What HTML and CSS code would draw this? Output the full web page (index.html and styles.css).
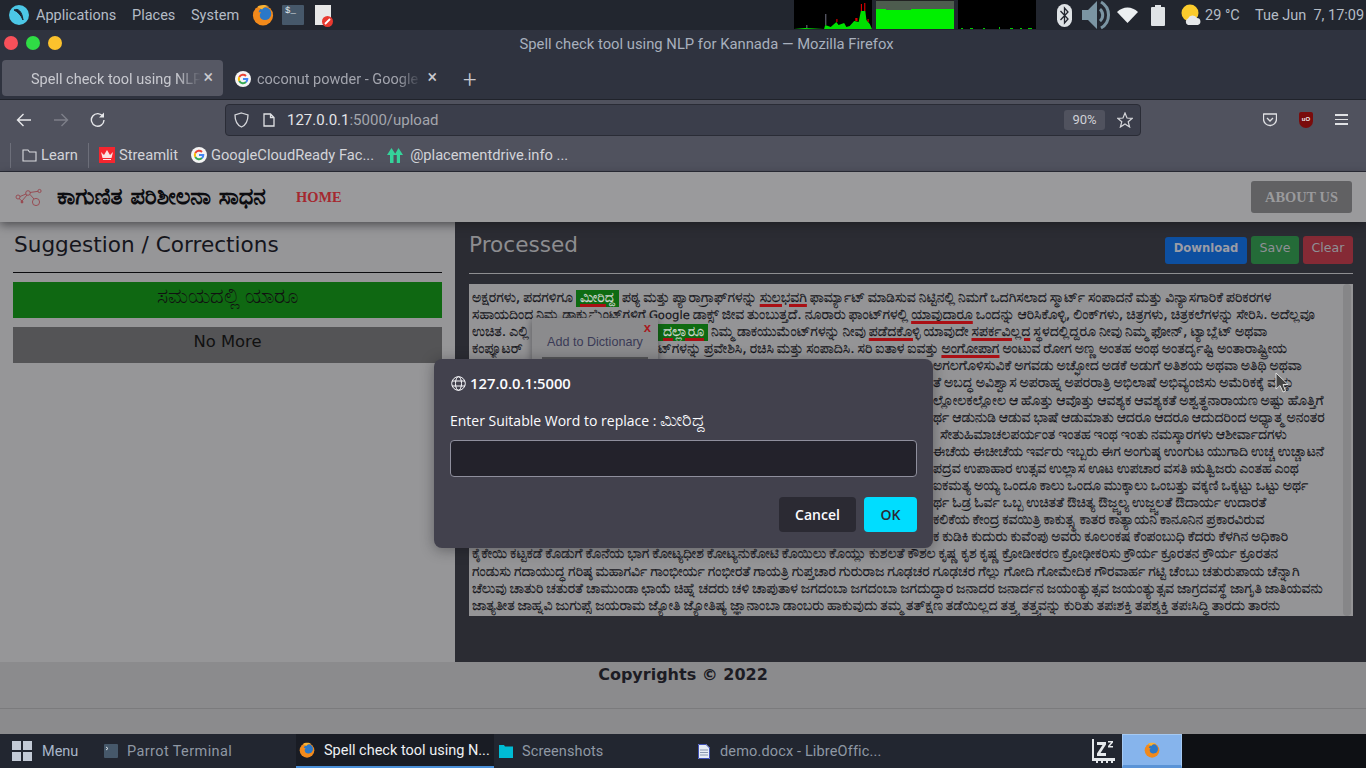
FILE: index.html
```html
<!DOCTYPE html>
<html lang="en">
<head>
    <meta charset="UTF-8">
    <title>Spell check tool using NLP for Kannada</title>
    <link rel="stylesheet" href="styles.css">
</head>
<body>
    <svg class="defs" width="0" height="0">
        <symbol id="fox" viewBox="0 0 24 24">
            <circle cx="12" cy="12.5" r="11" fill="#f28a1c"/>
            <circle cx="14" cy="10.5" r="7" fill="#2b78c8"/>
            <path d="M3 8 C2 14 6 21 13 21 C18 21 21 18 22 14 C19 18 13 19 10 16 C8 14 8 11 10 9 C7 9 5 9 3 8Z" fill="#f28a1c"/>
            <path d="M6 3 C8 1 15 0 19 3 C15 2 12 4 11 6 C9 5 7 4 6 3Z" fill="#f9b233"/>
        </symbol>
        <symbol id="goog" viewBox="0 0 16 16">
            <circle cx="8" cy="8" r="8" fill="#f4f4f4"/>
            <path d="M4.3 6 A4.3 4.3 0 0 1 11 4.9" fill="none" stroke="#e94235" stroke-width="2"/>
            <path d="M4.3 10 A4.3 4.3 0 0 1 4.3 6" fill="none" stroke="#fabb05" stroke-width="2"/>
            <path d="M11 11.1 A4.3 4.3 0 0 1 4.3 10" fill="none" stroke="#34a853" stroke-width="2"/>
            <path d="M8 8 H12.3 A4.3 4.3 0 0 1 11 11.1" fill="none" stroke="#4285f4" stroke-width="2"/>
        </symbol>
    </svg>

    <div class="panel">
        <svg class="p-logo" width="20" height="20" viewBox="0 0 20 20"><circle cx="10" cy="10" r="10" fill="#4cc7e6"/><path d="M5 5 C9 3 13 6 14 15 C12 10 9 7 5 5Z" fill="#1c2430" stroke="#1c2430"/></svg>
        <span class="p-item p-apps">Applications</span>
        <span class="p-item p-places">Places</span>
        <span class="p-item p-system">System</span>
        <svg class="p-fox" width="22" height="22"><use href="#fox"/></svg>
        <div class="p-term">$_</div>
        <svg class="p-doc" width="18" height="22" viewBox="0 0 18 22"><rect width="16" height="20" fill="#e8e8e8"/><circle cx="12.5" cy="16.5" r="5.5" fill="#e8392f"/><path d="M10 19 L15 14" stroke="#fff" stroke-width="1.8"/></svg>
        <svg class="graph g1" width="78" height="29" viewBox="0 0 70 29" preserveAspectRatio="none">
            <rect width="70" height="29" fill="#000"/>
            <path d="M0 29 L10 28 L27 29 L28 25 L33 27 L38 22 L40 25 L45 23 L47 27 L50 26 L54 21 L58 22 L60 11 L64 11 L65 20 L68 24 L70 29Z" fill="#00e000"/>
            <path d="M60 11 V4 H61 V11Z M63 11 V3 H64 V11Z M38 22 V19 H39 V22Z M55 21 V18 H57 V21Z M66 22 V19 H67 V22Z" fill="#e00000"/>
            <path d="M28 25 V14 H29 V25Z M11 28 V25 H12 V28Z" fill="#667"/>
        </svg>
        <svg class="graph g2" width="78" height="29"><rect width="78" height="29" fill="#00f000"/><rect width="78" height="9" fill="#4d5c4e"/><rect x="10" y="9" width="25" height="1" fill="#4d5c4e"/><rect width="78" height="1" fill="#222"/></svg>
        <svg class="graph g3" width="78" height="29"><rect width="78" height="29" fill="#000"/><path d="M3 28h2v1h-2z M12 28h3v1h-3z M25 28h2v1h-2z M41 27h1v2h-1z M52 28h3v1h-3z M62 28h2v1h-2z M70 28h4v1h-4z" fill="#0c0"/></svg>
        <svg class="t-bt" width="15" height="23" viewBox="0 0 15 23"><rect width="15" height="23" rx="7.5" fill="#dfe3e6"/><path d="M3.5 7 L11 15 L7.5 19 V4 L11 8 L3.5 16" fill="none" stroke="#23262f" stroke-width="1.3"/></svg>
        <svg class="t-vol" width="29" height="30" viewBox="0 0 29 30"><path d="M0 10 H6 L15 1 V29 L6 20 H0Z" fill="#7b95a3"/><path d="M18 9 A8 8 0 0 1 18 21 M19 2 A15 15 0 0 1 19 28" fill="none" stroke="#7b95a3" stroke-width="3"/></svg>
        <svg class="t-wifi" width="21" height="16" viewBox="0 0 21 16"><path d="M0 5 C6 -1 15 -1 21 5 L10.5 16Z" fill="#eceff1"/></svg>
        <svg class="t-bat" width="14" height="21" viewBox="0 0 14 21"><path d="M4 0 H10 V2 H13 A1 1 0 0 1 14 3 V20 A1 1 0 0 1 13 21 H1 A1 1 0 0 1 0 20 V3 A1 1 0 0 1 1 2 H4Z" fill="#dfe3e6"/></svg>
        <svg class="t-sun" width="21" height="22" viewBox="0 0 21 22"><circle cx="9" cy="9" r="8.5" fill="#fbcb2c"/><path d="M7 21 A3.5 3.5 0 0 1 7 14.5 A5 5 0 0 1 16 14 A3.6 3.6 0 0 1 17 21Z" fill="#e6e8ea"/></svg>
        <span class="p-item p-temp">29 °C</span>
        <span class="p-item p-date">Tue Jun&nbsp; 7, 17:09</span>
    </div>

    <div class="titlebar">
        <div class="lights"><i class="red"></i><i class="green"></i><i class="amber"></i></div>
        <div class="title">Spell check tool using NLP for Kannada — Mozilla Firefox</div>
    </div>

    <div class="tabs">
        <div class="tab active"><span class="tab-text">Spell check tool using NLP</span><span class="tab-x">×</span></div>
        <div class="tab other">
            <svg width="16" height="16"><use href="#goog"/></svg>
            <span class="tab-text">coconut powder - Google</span><span class="tab-x">×</span>
        </div>
        <span class="newtab">+</span>
    </div>

    <div class="toolbar">
        <svg class="tb-back" width="16" height="14" viewBox="0 0 16 14"><path d="M15 7 H2 M7.5 1 L1.5 7 L7.5 13" fill="none" stroke="#e6e7ea" stroke-width="1.4"/></svg>
        <svg class="tb-fwd" width="16" height="14" viewBox="0 0 16 14"><path d="M1 7 H14 M8.5 1 L14.5 7 L8.5 13" fill="none" stroke="#7d7f89" stroke-width="1.4"/></svg>
        <svg class="tb-reload" width="15" height="15" viewBox="0 0 15 15"><path d="M13 4.5 A6.3 6.3 0 1 0 14 8" fill="none" stroke="#e6e7ea" stroke-width="1.4"/><path d="M14 0.5 V5.5 H9Z" fill="#e6e7ea"/></svg>
        <div class="urlbar">
            <svg class="u-shield" width="15" height="16" viewBox="0 0 15 16"><path d="M7.5 1 L14 3 C14 9 12 13 7.5 15 C3 13 1 9 1 3Z" fill="none" stroke="#d5d6da" stroke-width="1.3"/></svg>
            <svg class="u-page" width="12" height="14" viewBox="0 0 12 14"><path d="M1 1 H7.5 L11 4.5 V13 H1Z M7.5 1 V4.5 H11" fill="none" stroke="#e0e1e4" stroke-width="1.3"/></svg>
            <span class="u-text"><b>127.0.0.1</b>:5000/upload</span>
            <span class="u-zoom">90%</span>
            <svg class="u-star" width="16" height="16" viewBox="0 0 16 16"><path d="M8 1 L10 6 L15.3 6.3 L11.2 9.7 L12.6 15 L8 12 L3.4 15 L4.8 9.7 L0.7 6.3 L6 6Z" fill="none" stroke="#d5d6da" stroke-width="1.2"/></svg>
        </div>
        <svg class="tb-pocket" width="14" height="14" viewBox="0 0 14 14"><path d="M1 1 H13 A0.5 0.5 0 0 1 13.5 2 V6 A6.5 6.5 0 0 1 0.5 6 V2 A0.5 0.5 0 0 1 1 1Z M4 5 L7 8 L10 5" fill="none" stroke="#e0e1e4" stroke-width="1.3"/></svg>
        <div class="tb-ublock">uO</div>
        <div class="tb-menu"><i></i><i></i><i></i></div>
    </div>

    <div class="bookmarks">
        <span class="bm-sep"></span>
        <svg class="bm-folder" width="15" height="13" viewBox="0 0 15 13"><path d="M1 1 H6 L7.5 3 H14 V12 H1Z" fill="none" stroke="#d9dade" stroke-width="1.1"/></svg>
        <span class="bm-text bm-learn">Learn</span>
        <span class="bm-sep bm-sep2"></span>
        <svg class="bm-st" width="16" height="16" viewBox="0 0 16 16"><rect width="16" height="16" fill="#f5262f"/><path d="M2 5 L5 8 L8 3 L11 8 L14 5 L12.5 11 H3.5Z M4 12 H12 V13 H4Z" fill="#fbe2e2"/></svg>
        <span class="bm-text">Streamlit</span>
        <svg class="bm-g" width="16" height="16"><use href="#goog"/></svg>
        <span class="bm-text">GoogleCloudReady Fac...</span>
        <svg class="bm-tree" width="16" height="15" viewBox="0 0 16 15"><path d="M4.5 0 L9 7 H6.5 V15 H3 V7 H0Z M11.5 0 L16 7 H13 V15 H9.8 V7 H7.5Z" fill="#35d39a"/></svg>
        <span class="bm-text">@placementdrive.info ...</span>
    </div>

    <nav class="navbar">
        <svg class="nav-logo" width="28" height="20" viewBox="0 0 28 20" fill="none" stroke="#96454d" stroke-width="0.9"><circle cx="4" cy="10" r="2"/><circle cx="14" cy="6" r="2.3"/><circle cx="22" cy="15" r="3.6"/><circle cx="25.5" cy="4" r="1.6"/><circle cx="8" cy="15" r="1" fill="#96454d"/><path d="M6 9.5 L12 7 M16 7.5 L20 12 M16 5.5 L24 4.3 M5 11.5 L8 14 L13 8"/></svg>
        <span class="brand">ಕಾಗುಣಿತ ಪರಿಶೀಲನಾ ಸಾಧನ</span>
        <a class="home">HOME</a>
        <a class="about">ABOUT US</a>
    </nav>

    <main class="content">
        <section class="left">
            <h2 class="heading">Suggestion / Corrections</h2>
            <hr class="rule dark">
            <div class="sugg ok">ಸಮಯದಲ್ಲಿ ಯಾರೂ</div>
            <div class="sugg none">No More</div>
        </section>
        <section class="right">
            <div class="right-head">
                <h2 class="heading proc">Processed</h2>
                <button class="btn blue">Download</button>
                <button class="btn green">Save</button>
                <button class="btn crimson">Clear</button>
            </div>
            <hr class="rule light">
            <div class="doc">
                <p>ಅಕ್ಷರಗಳು, ಪದಗಳಿಗೂ <mark>ಮೀರಿದ್ದ</mark> ಪಠ್ಯ ಮತ್ತು ಪ್ಯಾರಾಗ್ರಾಫ್‌ಗಳನ್ನು <u>ಸುಲಭವಗಿ</u> ಫಾರ್ಮ್ಯಾಟ್ ಮಾಡಿಸುವ ನಿಟ್ಟಿನಲ್ಲಿ ನಿಮಗೆ ಒದಗಿಸಲಾದ ಸ್ಮಾರ್ಟ್ ಸಂಪಾದನೆ ಮತ್ತು ವಿನ್ಯಾಸಗಾರಿಕೆ ಪರಿಕರಗಳ</p>
                <p>ಸಹಾಯದಿಂದ ನಿಮ್ಮ ಡಾಕ್ಯುಮೆಂಟ್‌ಗಳಿಗೆ <span class="en">Google</span> ಡಾಕ್ಸ್ ಜೀವ ತುಂಬುತ್ತದೆ. ನೂರಾರು ಫಾಂಟ್‌ಗಳಲ್ಲಿ <u>ಯಾವುದಾರೂ</u> ಒಂದನ್ನು ಆರಿಸಿಕೊಳ್ಳಿ, ಲಿಂಕ್‌ಗಳು, ಚಿತ್ರಗಳು, ಚಿತ್ರಕಲೆಗಳನ್ನು ಸೇರಿಸಿ. ಅದೆಲ್ಲವೂ</p>
                <p><span class="clip">ಉಚಿತ. ಎಲ್ಲಿ</span><mark class="cut">ದಲ್ಲಾರೂ</mark> ನಿಮ್ಮ ಡಾಕಯುಮೆಂಟ್‌ಗಳನ್ನು ನೀವು <u>ಪಡೆದಕೊಳ್ಳಿ</u> ಯಾವುದೇ <u>ಸಪರ್ಕವಿಲ್ಲದ</u> ಸ್ಥಳದಲ್ಲಿದ್ದರೂ ನೀವು ನಿಮ್ಮ ಫೋನ್, ಟ್ಯಾಬ್ಲೆಟ್ ಅಥವಾ</p>
                <p><span class="clip">ಕಂಪ್ಯೂಟರ್</span>ಟ್‌ಗಳನ್ನು ಪ್ರವೇಶಿಸಿ, ರಚಿಸಿ ಮತ್ತು ಸಂಪಾದಿಸಿ. ಸರಿ ಐತಾಳ ಐವತ್ತು <u>ಅಂಗೋಪಾಗ</u> ಅಂಟುವ ರೋಗ ಅಣ್ಣ ಅಂತಹ ಅಂಥ ಅಂತರ್ದೃಷ್ಟಿ ಅಂತಾರಾಷ್ಟ್ರೀಯ</p>
                <p><span class="under"></span>ಅಗಲಗೊಳಿಸುವಿಕೆ ಅಗವಡು ಅಚ್ಛೋದ ಅಡಕೆ ಅಡುಗೆ ಅತಿಶಯ ಅಥವಾ ಅತಿಥಿ ಅಥವಾ</p>
                <p><span class="under"></span>ತೆ ಅಬದ್ಧ ಅವಿಶ್ವಾಸ ಅಪರಾಹ್ನ ಅಪರರಾತ್ರಿ ಅಭಿಲಾಷೆ ಅಭಿವ್ಯಂಜಿಸು ಅಮೆರಿಕಕ್ಕೆ ಮತ್ತು</p>
                <p><span class="under"></span>ಲ್ಲೋಲಕಲ್ಲೋಲ ಆ ಹೊತ್ತು ಆವೊತ್ತು ಆವಶ್ಯಕ ಆವಶ್ಯಕತೆ ಅಶ್ವತ್ಥನಾರಾಯಣ ಅಷ್ಟು ಹೊತ್ತಿಗೆ</p>
                <p><span class="under"></span>ರ್ಥ ಆಡುನುಡಿ ಆಡುವ ಭಾಷೆ ಆಡುಮಾತು ಆದರೂ ಆದರೂ ಆದುದರಿಂದ ಅಧ್ಯಾತ್ಮ ಅನಂತರ</p>
                <p><span class="under more"></span>ಸೇತುಹಿಮಾಚಲಪರ್ಯಂತ ಇಂತಹ ಇಂಥ ಇಂತು ನಮಸ್ಕಾರಗಳು ಆಶೀರ್ವಾದಗಳು</p>
                <p><span class="under"></span>ಈಚೆಯ ಈಚೀಚೆಯ ಇರ್ವರು ಇಬ್ಬರು ಈಗ ಅಂಗುಷ್ಠ ಉಂಗುಟ ಯುಗಾದಿ ಉಚ್ಚ ಉಚ್ಚಾಟನೆ</p>
                <p><span class="under"></span>ಪದ್ರವ ಉಪಾಹಾರ ಉತ್ಸವ ಉಲ್ಲಾಸ ಊಟ ಉಪಚಾರ ವಸತಿ ಋತ್ವಿಜರು ಎಂತಹ ಎಂಥ</p>
                <p><span class="under"></span>ಐಕಮತ್ಯ ಅಯ್ಯ ಒಂದೂ ಕಾಲು ಒಂದೂ ಮುಕ್ಕಾಲು ಒಂಬತ್ತು ವಕ್ಕಣಿ ಒಕ್ಕಟ್ಟು ಒಟ್ಟು ಅರ್ಥ</p>
                <p><span class="under"></span>ರ್ಥ ಓಡ್ರ ಓರ್ವ ಒಬ್ಬ ಉಚಿತತೆ ಔಚಿತ್ಯ ಔಜ್ಜ್ವಲ್ಯ ಉಜ್ಜ್ವಲತೆ ಔದಾರ್ಯ ಉದಾರತೆ</p>
                <p><span class="under"></span>ಕಲಿಕೆಯ ಕೇಂದ್ರ ಕವಯಿತ್ರಿ ಕಾಕುತ್ಸ್ಥ ಕಾತರ ಕಾತ್ಯಾಯನಿ ಕಾನೂನಿನ ಪ್ರಕಾರವಿರುವ</p>
                <p><span class="under"></span>ಕ ಕುಡಿಕಿ ಕುದುರು ಕುವೆಂಪು ಅವರು ಕೂಲಂಕಷ ಕೆಂಪಂಬುಧಿ ಕೆದರು ಕೆಳಗಿನ ಅಧಿಕಾರಿ</p>
                <p>ಕೈಕೇಯಿ ಕಟ್ಟಕಡೆ ಕೊಡುಗೆ ಕೊನೆಯ ಭಾಗ ಕೋಟ್ಯಧೀಶ ಕೋಟ್ಯನುಕೋಟಿ ಕೊಯಿಲು ಕೊಯ್ಲು ಕುಶಲತೆ ಕೌಶಲ ಕೃಷ್ಣ ಕೃಶ ಕೃಷ್ಣ ಕ್ರೋಡೀಕರಣ ಕ್ರೋಢೀಕರಿಸು ಕ್ರೌರ್ಯ ಕ್ರೂರತನ ಕ್ರೌರ್ಯ ಕ್ರೂರತನ</p>
                <p>ಗಂಡುಸು ಗದಾಯುದ್ಧ ಗರಿಷ್ಠ ಮಹಾಗರ್ವಿ ಗಾಂಭೀರ್ಯ ಗಂಭೀರತೆ ಗಾಯತ್ರಿ ಗುಪ್ತಚಾರ ಗುರುರಾಜ ಗೂಢಚರ ಗೂಢಚರ ಗೆಲ್ಲು ಗೋದಿ ಗೋಮೇದಿಕ ಗೌರವಾರ್ಹ ಗಟ್ಟಿ ಚೆಂಬು ಚತುರುಪಾಯ ಚೆನ್ನಾಗಿ</p>
                <p>ಚೆಲುವು ಚಾತುರಿ ಚತುರತೆ ಚಾಮುಂಡಾ ಛಾಯೆ ಚಿಹ್ನೆ ಚದರು ಚಳಿ ಚಾಪುತಾಳ ಜಗದಂಬಾ ಜಗದಂಬಾ ಜಗದುದ್ಧಾರ ಜನಾದರ ಜನಾರ್ದನ ಜಯಂತ್ಯುತ್ಸವ ಜಯಂತ್ಯುತ್ಸವ ಜಾಗ್ರದವಸ್ಥೆ ಜಾಗೃತಿ ಜಾತಿಯವನು</p>
                <p>ಜಾತ್ಯತೀತ ಜಾಹ್ನವಿ ಜುಗುಪ್ಸೆ ಜಯರಾಮ ಜ್ಯೋತಿ ಜ್ಯೋತಿಷ್ಯ ಜ್ಞಾನಾಂಬಾ ಡಾಂಬರು ಹಾಕುವುದು ತಮ್ಮ ತತ್ಕ್ಷಣ ತಡೆಯಿಲ್ಲದ ತತ್ತ್ವ ತತ್ತ್ವವನ್ನು ಕುರಿತು ತಪಃಶಕ್ತಿ ತಪಶ್ಶಕ್ತಿ ತಪಃಸಿದ್ಧಿ ತಾರದು ತಾರನು</p>
                <div class="scroll"></div>
            </div>
        </section>
    </main>

    <footer class="footer">
        <div class="copy">Copyrights © 2022</div>
        <div class="foot-line"></div>
    </footer>

    <div class="taskbar">
        <div class="menu-grid"><i></i><i></i><i></i><i></i></div>
        <span class="tk tk-menu">Menu</span>
        <svg class="tk-term" width="14" height="14" viewBox="0 0 14 14"><rect width="14" height="14" rx="1" fill="#46586a"/><path d="M2 3 L4 4.5 L2 6" fill="none" stroke="#e8edf0" stroke-width="0.9"/></svg>
        <span class="tk tk-parrot">Parrot Terminal</span>
        <div class="tk-active">
            <svg width="16" height="16"><use href="#fox"/></svg>
            <span>Spell check tool using N...</span>
        </div>
        <svg class="tk-folder" width="14" height="14" viewBox="0 0 14 14"><path d="M0 1 H5 L6 2.5 H14 V14 H0Z" fill="#00bcd4"/></svg>
        <span class="tk tk-shots">Screenshots</span>
        <svg class="tk-file" width="12" height="15" viewBox="0 0 12 15"><path d="M0 0 H8 L12 4 V15 H0Z" fill="#e6ecf5"/><path d="M2 6 H10 M2 8.5 H10 M2 11 H10" stroke="#8a98b0"/><path d="M0.5 0.5 H8 L11.5 4 V14.5 H0.5Z" fill="none" stroke="#3f51b5"/></svg>
        <span class="tk tk-demo">demo.docx - LibreOffic...</span>
        <svg class="tk-sleep" width="23" height="24" viewBox="0 0 23 24"><rect width="2" height="22" fill="#e6e9ec"/><path d="M2 19 H23 V22 H21 V24 H19 V22 H16 V24 H14 V22 H11 V24 H9 V22 H6 V24 H4 V22 H2Z" fill="#e6e9ec"/><path d="M5 3 H14 V5.5 L8.5 14 H14 V17 H5 V14.5 L10.5 6 H5Z" fill="#e6e9ec"/><path d="M16 2 H21 V3.5 L18 7 H21 V8.5 H16 V7 L19 3.5 H16Z" fill="#e6e9ec"/></svg>
        <div class="tk-fox"><svg width="16" height="16"><use href="#fox"/></svg></div>
        <div class="tk-empty"></div>
    </div>

    <div class="popover">
        <span class="pop-x">x</span>
        <div class="pop-label">Add to Dictionary</div>
        <div class="pop-btn"></div>
    </div>

    <div class="modal">
        <div class="m-origin">
            <svg width="15" height="15" viewBox="0 0 15 15" fill="none" stroke="#fbfbfe" stroke-width="1"><circle cx="7.5" cy="7.5" r="6.8"/><ellipse cx="7.5" cy="7.5" rx="3" ry="6.8"/><path d="M1 5 H14 M1 10 H14"/></svg>
            <span>127.0.0.1:5000</span>
        </div>
        <div class="m-msg">Enter Suitable Word to replace : <span class="kn">ಮೀರಿದ್ದ</span></div>
        <div class="m-input"></div>
        <div class="m-actions">
            <button class="m-btn cancel">Cancel</button>
            <button class="m-btn okay">OK</button>
        </div>
    </div>

    <svg class="cursor" width="14" height="21" viewBox="0 0 14 21"><path d="M1 1 V17 L5 13.5 L8 20 L10.5 19 L8 12.5 H13Z" fill="#444" stroke="#ddd" stroke-width="1"/></svg>
</body>
</html>
```

FILE: styles.css
```css
* { box-sizing: border-box; }
html, body { margin: 0; padding: 0; }
body { position: relative; width: 1366px; height: 768px; overflow: hidden; display: flex; flex-direction: column; font-family: "DejaVu Sans", sans-serif; background: #2b2c33; }
.defs { position: absolute; }
p { margin: 0; }

/* desktop panel */
.panel { height: 30px; background: #22262f; display: flex; align-items: center; flex: none; color: #b4bcc6; font-family: Roboto, sans-serif; font-size: 14.5px; }
.p-logo { margin-left: 9px; }
.p-apps { margin-left: 7px; width: 96px; }
.p-places { width: 59px; }
.p-system { width: 61px; }
.p-fox { flex: none; }
.p-term { width: 22px; height: 20px; margin-left: 8px; background: #46586a; border-radius: 1px; color: #e8edf0; font: 9px "Liberation Mono", monospace; padding: 1px 0 0 3px; }
.p-doc { margin-left: 11px; margin-top: 2px; flex: none; }
.g1 { margin-left: 461px; }
.g2 { margin-left: 4px; }
.g3 { margin-left: 4px; }
.graph { align-self: flex-start; flex: none; }
.t-bt { margin-left: 21px; }
.t-vol { margin-left: 10px; }
.t-wifi { margin-left: 6px; }
.t-bat { margin-left: 13px; }
.t-sun { margin-left: 16px; }
.p-temp { margin-left: 3px; width: 50px; }
.p-date { white-space: nowrap; }

/* firefox chrome */
.titlebar { height: 30px; background: #2f333f; display: flex; align-items: center; justify-content: center; position: relative; flex: none; color: #a8b0bd; font-family: Roboto, sans-serif; font-size: 14.8px; padding: 0 0 2px 47px; }
.lights { position: absolute; left: 4px; top: 6px; display: flex; gap: 8px; }
.lights i { width: 14px; height: 14px; border-radius: 50%; }
.lights .red { background: #f8505a; }
.lights .green { background: #2fdc45; }
.lights .amber { background: #fcc22d; }
.tabs { height: 40px; background: #2f333f; display: flex; align-items: flex-start; flex: none; padding-left: 2px; font-family: Roboto, sans-serif; font-size: 14.5px; border-bottom: 1px solid #20232b; }
.tab { height: 36px; display: flex; align-items: center; position: relative; padding-top: 2px; }
.tab.active { width: 221px; background: #565864; border-radius: 4px; color: #c9cad0; padding-left: 29px; }
.tab.other { width: 224px; margin-left: 2px; padding-left: 10px; color: #a3a5ae; }
.tab.other svg { margin-right: 6px; }
.tab-text { white-space: nowrap; overflow: hidden; display: block; }
.tab.active .tab-text { width: 170px; -webkit-mask-image: linear-gradient(90deg, #000 145px, transparent); mask-image: linear-gradient(90deg, #000 145px, transparent); }
.tab.other .tab-text { width: 165px; -webkit-mask-image: linear-gradient(90deg, #000 140px, transparent); mask-image: linear-gradient(90deg, #000 140px, transparent); }
.tab-x { position: absolute; right: 10px; top: 7px; font-size: 18px; line-height: 20px; color: #c8c9cf; }
.tab.other .tab-x { right: 12px; }
.newtab { margin: 8px 0 0 14px; color: #c8c9cf; font-size: 24px; line-height: 24px; font-weight: 300; }
.toolbar { height: 39px; background: #50525e; display: flex; align-items: center; flex: none; padding-left: 16px; }
.tb-fwd { margin-left: 21px; }
.tb-reload { margin-left: 21px; }
.urlbar { width: 916px; height: 32px; margin-left: 120px; background: #3b3e4b; border: 1px solid #2a2c36; border-radius: 4px; display: flex; align-items: center; padding-left: 8px; color: #a4a6ad; font-family: Roboto, sans-serif; font-size: 15px; }
.u-page { margin-left: 14px; }
.u-text { margin-left: 12px; width: 777px; white-space: nowrap; padding-top: 1px; }
.u-text b { font-weight: 400; color: #e3e4e7; }
.u-zoom { width: 41px; height: 20px; background: #50525e; border-radius: 3px; font-size: 13px; line-height: 20px; text-align: center; color: #cfd0d5; }
.u-star { margin-left: 12px; }
.tb-pocket { margin-left: 122px; }
.tb-ublock { width: 14px; height: 16px; margin-left: 22px; background: #7a0c0c; border-radius: 2px 2px 7px 7px; color: #eee; font: bold 6px "Liberation Sans", sans-serif; line-height: 14px; text-align: center; }
.tb-menu { width: 13px; margin-left: 22px; display: flex; flex-direction: column; gap: 3px; }
.tb-menu i { height: 1.5px; background: #e0e1e4; }
.bookmarks { height: 33px; background: #50525e; display: flex; align-items: center; flex: none; padding-left: 10px; color: #d3d4d9; font-family: Roboto, sans-serif; font-size: 14.7px; border-bottom: 1px solid #2a2c36; }
.bm-sep { width: 1px; height: 25px; background: #6d6f7a; }
.bm-sep2 { margin-left: 11px; }
.bm-folder { margin-left: 11px; margin-right: 4px; }
.bm-learn { width: 36px; }
.bm-st { margin-left: 10px; margin-right: 4px; }
.bm-g { margin-left: 13px; margin-right: 4px; }
.bm-tree { margin-left: 13px; margin-right: 7px; }
.bm-text { white-space: nowrap; }

/* the page, dimmed by the prompt */
.navbar { height: 50px; background: #9a9a9c; display: flex; align-items: center; flex: none; padding: 0 14px; position: relative; z-index: 1; box-shadow: 0 3px 9px rgba(20,20,25,.55); }
.brand { margin-left: 15px; width: 239px; color: #0c0c10; font-size: 22.6px; font-weight: bold; white-space: nowrap; line-height: 24px; text-rendering: geometricPrecision; }
.home { color: #a5282f; font: bold 14.4px "Liberation Serif", serif; }
.about { margin-left: auto; width: 101px; height: 32px; background: #616163; border-radius: 3px; color: #9a9a9c; font: bold 14.4px/32px "Liberation Serif", serif; text-align: center; }
.content { height: 440px; display: flex; flex: none; }
.left { width: 455px; flex: none; background: #969698; padding: 0 13px; }
.right { flex: 1; min-width: 0; background: #2b2c33; padding: 0 13px 0 14px; }
.heading { margin: 0; font-size: 21.6px; font-weight: 400; line-height: 26px; color: #15151c; padding-top: 10px; height: 36px; }
.left .heading { padding-left: 1px; }
.proc { color: #8d8d90; flex: 1; }
.rule { border: 0; height: 1px; margin: 0; }
.dark { background: #0b0b0e; margin-top: 14px; }
.light { background: #8e8e91; margin-top: 9px; }
.sugg { width: 429px; height: 36px; text-align: center; color: #111; }
.ok { margin-top: 9px; background: #0f6812; font-size: 21px; line-height: 29px; word-spacing: -2px; }
.none { margin-top: 9px; background: #545456; font-size: 16.4px; line-height: 30px; }
.right-head { display: flex; align-items: flex-start; height: 42px; }
.btn { border: 0; height: 28px; margin: 14px 0 0 4px; border-radius: 3px; font-family: "DejaVu Sans", sans-serif; font-size: 12.6px; color: #8f9096; padding: 0 0 6px; }
.blue { width: 82px; margin-top: 15px; height: 27px; background: #0d4fa0; font-weight: bold; font-size: 11.6px; color: #9a9ca6; padding-bottom: 5px; }
.green { width: 48px; background: #246b38; }
.crimson { width: 50px; background: #852a35; }
.doc { position: relative; height: 332px; margin-top: 10px; background: #949496; padding: 6px 0 0 3px; color: #15151a; font-size: 14px; line-height: 17.1px; word-spacing: -1.5px; text-rendering: geometricPrecision; -webkit-text-stroke: .2px; overflow: hidden; white-space: nowrap; }
.doc p { height: 17.1px; }
.en { font-size: 11.6px; }
.under { display: inline-block; width: 461px; height: 1px; }
.under.more { width: 468px; }
.clip { display: inline-block; width: 186px; overflow: hidden; vertical-align: top; }
mark { display: inline-block; background: #0e6b12; color: #cfd8cf; padding: 0 4px; height: 17px; line-height: 17px; vertical-align: top; text-decoration: underline #aa1015 3px; }
mark.cut { padding-left: 5px; }
u { text-decoration: underline #aa1015 3px; }
.scroll { position: absolute; top: 0; right: 2px; width: 8px; height: 100%; background: #868688; border-radius: 4px; }
.footer { height: 72px; background: #8b8b8d; flex: none; }
.copy { height: 46px; text-align: center; font-size: 16px; font-weight: bold; color: #1c1c24; line-height: 26px; }
.foot-line { height: 1px; background: #7b7b7d; }

/* taskbar */
.taskbar { flex: 1; background: #222630; display: flex; align-items: center; color: #8f98a4; font-family: Roboto, sans-serif; font-size: 14.5px; }
.menu-grid { display: grid; grid-template-columns: 9px 9px; gap: 2px; margin-left: 12px; }
.menu-grid i { height: 9px; background: #c3cad6; }
.tk { white-space: nowrap; }
.tk-menu { margin-left: 10px; width: 37px; color: #a9b6c9; }
.tk-term { margin-left: 25px; flex: none; }
.tk-parrot { margin-left: 9px; width: 169px; letter-spacing: .4px; }
.tk-active { width: 198px; align-self: stretch; display: flex; align-items: center; gap: 9px; padding-left: 3px; background: #191c24; border-bottom: 2px solid #4a90d9; color: #eef0f3; white-space: nowrap; }
.tk-folder { margin-left: 5px; }
.tk-shots { margin-left: 9px; width: 176px; letter-spacing: .1px; }
.tk-demo { margin-left: 10px; width: 372px; letter-spacing: .15px; }
.tk-sleep { flex: none; }
.tk-fox { width: 60px; margin-left: 7px; align-self: stretch; background: #86b4ec; border: 1px solid #a5c9f2; border-bottom: 3px solid #5a93d6; display: flex; align-items: center; justify-content: center; }
.tk-empty { flex: 1; align-self: stretch; background: #0e1014; }

/* things lying over the page */
.popover { position: absolute; left: 532px; top: 318px; width: 126px; height: 45px; background: #8b8b8d; box-shadow: 0 2px 8px rgba(20,20,25,.5); font-family: "Liberation Sans", sans-serif; }
.popover::before { content: ""; position: absolute; left: 56px; top: -6px; border: 7px solid transparent; border-top: 0; border-bottom-color: #8b8b8d; }
.pop-x { position: absolute; right: 7px; top: 3px; color: #a81a1f; font-size: 13px; font-weight: bold; line-height: 14px; }
.pop-label { position: absolute; left: 15px; top: 17px; font-size: 12.6px; line-height: 15px; color: #3a3a56; white-space: nowrap; }
.pop-btn { position: absolute; left: 10px; top: 39px; width: 106px; height: 3px; background: #565658; }
.modal { position: absolute; left: 434px; top: 359px; width: 499px; height: 189px; background: #42414d; border-radius: 8px; padding: 15px 16px 16px; color: #fbfbfe; font-family: "Open Sans", sans-serif; font-size: 14px; box-shadow: 0 2px 14px rgba(20,20,25,.4); }
.m-origin { display: flex; align-items: center; gap: 4px; height: 18px; font-weight: 600; font-size: 14.8px; padding-left: 1px; }
.m-msg { margin-top: 18px; height: 19px; line-height: 19px; white-space: nowrap; }
.kn { font-size: 17.5px; word-spacing: 0; }
.m-input { margin-top: 11px; height: 37px; background: #23222b; border: 1px solid #8f8f9d; border-radius: 4px; }
.m-actions { display: flex; justify-content: flex-end; gap: 8px; margin-top: 20px; }
.m-btn { height: 35px; border: 0; border-radius: 4px; font: 600 14px "Open Sans", sans-serif; }
.cancel { width: 77px; background: #2b2a33; color: #fbfbfe; }
.okay { width: 53px; background: #00ddff; color: #2b2a33; }
.cursor { position: absolute; left: 1275px; top: 372px; }
```
